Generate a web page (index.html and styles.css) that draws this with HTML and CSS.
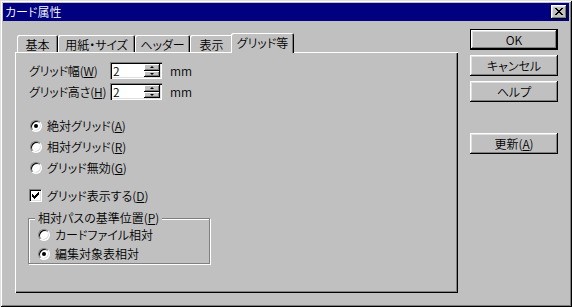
FILE: index.html
```html
<!DOCTYPE html>
<html lang="ja">
<head>
<meta charset="utf-8">
<title>カード属性</title>
<link rel="stylesheet" href="styles.css">
</head>
<body>
<div class="window">
  <div class="titlebar">
    <span class="title">カード属性</span>
    <span class="close">
      <svg width="8" height="7" viewBox="0 0 8 7" shape-rendering="crispEdges">
        <path fill="#000" d="M0 0h2v1H0zM6 0h2v1H6zM1 1h2v1H1zM5 1h2v1H5zM2 2h4v1H2zM3 3h2v1H3zM2 4h4v1H2zM1 5h2v1H1zM5 5h2v1H5zM0 6h2v1H0zM6 6h2v1H6z"/>
      </svg>
    </span>
  </div>
  <div class="body">
    <div class="tabs-area">
      <div class="tabstrip">
        <div class="tab tab-kihon">基本</div>
        <div class="tab tab-paper">用紙・サイズ</div>
        <div class="tab tab-header">ヘッダー</div>
        <div class="tab tab-view">表示</div>
        <div class="tab tab-active">グリッド等</div>
      </div>
      <div class="pane">
        <div class="fields">
          <div class="field-row">
            <span class="field-label">グリッド幅(<u>W</u>)</span>
            <span class="spin-input">
              <span class="spin-value">2</span>
              <span class="spinner"><span class="spin-btn up"></span><span class="spin-btn down"></span></span>
            </span>
            <span class="unit">mm</span>
          </div>
          <div class="field-row">
            <span class="field-label">グリッド高さ(<u>H</u>)</span>
            <span class="spin-input">
              <span class="spin-value">2</span>
              <span class="spinner"><span class="spin-btn up"></span><span class="spin-btn down"></span></span>
            </span>
            <span class="unit">mm</span>
          </div>
        </div>
        <div class="options">
          <div class="option"><span class="radio checked"></span>絶対グリッド(<u>A</u>)</div>
          <div class="option"><span class="radio"></span>相対グリッド(<u>R</u>)</div>
          <div class="option"><span class="radio"></span>グリッド無効(<u>G</u>)</div>
        </div>
        <div class="option check-row">
          <span class="checkbox">
            <svg width="7" height="7" viewBox="0 0 7 7" shape-rendering="crispEdges">
              <path fill="#000" d="M6 0h1v3H6zM5 1h1v3H5zM4 2h1v3H4zM3 3h1v3H3zM2 4h1v3H2zM1 3h1v3H1zM0 2h1v3H0z"/>
            </svg>
          </span>グリッド表示する(<u>D</u>)
        </div>
        <fieldset class="group">
          <legend>相対パスの基準位置(<u>P</u>)</legend>
          <div class="option group-option"><span class="radio"></span>カードファイル相対</div>
          <div class="option group-option"><span class="radio checked"></span>編集対象表相対</div>
        </fieldset>
      </div>
    </div>
    <div class="buttons">
      <div class="btn btn-default">OK</div>
      <div class="btn">キャンセル</div>
      <div class="btn">ヘルプ</div>
      <div class="btn btn-update">更新(<u>A</u>)</div>
    </div>
  </div>
</div>
</body>
</html>
```

FILE: styles.css
```css
* { box-sizing: border-box; }

body {
  margin: 0;
  background: #c0c0c0;
  font-family: "Noto Sans CJK JP", "Noto Sans", sans-serif;
  font-size: 12px;
  font-weight: 350;
  color: #000;
  font-feature-settings: "palt";
  line-height: 1;
}

u { text-underline-offset: 1px; }

.window {
  width: 572px;
  height: 307px;
  padding: 3px;
  background: #c0c0c0;
  box-shadow: inset 1px 1px #dfdfdf, inset -1px -1px #000, inset 2px 2px #fff, inset -2px -2px #808080;
  display: flex;
  flex-direction: column;
}

.titlebar {
  height: 18px;
  background: #000080;
  color: #fff;
  display: flex;
  align-items: center;
  justify-content: space-between;
  padding: 0 2px 0 2px;
}

.title { line-height: 18px; }

.close {
  width: 16px;
  height: 14px;
  background: #c0c0c0;
  box-shadow: inset -1px -1px #000, inset 1px 1px #fff, inset -2px -2px #808080, inset 2px 2px #dfdfdf;
  display: flex;
  align-items: center;
  justify-content: center;
  padding: 0 1px 1px 0;
}

.close svg { display: block; }

.body {
  flex: 1;
  display: flex;
}

.tabs-area {
  margin: 12px 0 0 12px;
  width: 443px;
  display: flex;
  flex-direction: column;
}

.tabstrip {
  display: flex;
  align-items: flex-end;
  height: 19px;
  padding-left: 2px;
  position: relative;
  z-index: 1;
}

.tab {
  height: 17px;
  display: flex;
  align-items: center;
  justify-content: center;
  padding-top: 2px;
  background: #c0c0c0;
  border-radius: 2px 2px 0 0;
  box-shadow: inset 1px 1px #fff, inset -1px 0 #000, inset -2px 0 #808080;
}

.tab-kihon { width: 41px; }
.tab-paper { width: 77px; }
.tab-header { width: 55px; }
.tab-view { width: 43px; }

.tab-active {
  width: 63px;
  height: 20px;
  margin: 0 -2px -1px -2px;
  padding-top: 0;
  padding-bottom: 1px;
}

.pane {
  height: 241px;
  background: #c0c0c0;
  box-shadow: inset 1px 1px #fff, inset -1px -1px #000, inset -2px -2px #808080;
  padding: 10px 0 0 14px;
  display: flex;
  flex-direction: column;
  align-items: flex-start;
}

.fields {
  display: flex;
  flex-direction: column;
  gap: 4px;
}

.field-row {
  display: flex;
  align-items: center;
  height: 17px;
}

.field-label { width: 81px; letter-spacing: -0.2px; }

.spin-input {
  width: 52px;
  height: 17px;
  background: #fff;
  box-shadow: inset 1px 1px #808080, inset 2px 2px #000, inset -1px -1px #fff, inset -2px -2px #dfdfdf;
  display: flex;
  align-items: center;
  justify-content: space-between;
  padding: 2px 2px 2px 3px;
}

.spinner {
  width: 16px;
  height: 13px;
  display: grid;
  grid-template-rows: 7px 6px;
}

.spin-btn {
  background: #c0c0c0;
  box-shadow: inset -1px -1px #000, inset 1px 1px #fff, inset -2px -2px #808080;
  display: flex;
  align-items: center;
  justify-content: center;
  padding: 0 1px 1px 0;
}

.spin-btn::after {
  content: "";
  width: 0;
  height: 0;
  border-left: 2px solid transparent;
  border-right: 2px solid transparent;
}

.spin-btn.up::after { border-bottom: 2px solid #000; }
.spin-btn.down::after { border-top: 2px solid #000; }

.unit { margin-left: 8px; }

.options {
  margin-top: 15px;
  display: flex;
  flex-direction: column;
}

.option {
  display: flex;
  align-items: center;
  height: 21px;
}

.radio {
  width: 12px;
  height: 12px;
  margin: 0 5px 0 1px;
  border-radius: 50%;
  background: #fff;
  border: 1px solid;
  border-color: #808080 #fff #fff #808080;
  box-shadow: inset 1px 1px #000, inset -1px -1px #dfdfdf;
  display: flex;
  align-items: center;
  justify-content: center;
}

.radio.checked::after {
  content: "";
  width: 4px;
  height: 4px;
  border-radius: 50%;
  background: #000;
}

.check-row { margin-top: 7px; }

.checkbox {
  width: 13px;
  height: 13px;
  margin-right: 5px;
  background: #fff;
  border: 1px solid;
  border-color: #808080 #fff #fff #808080;
  box-shadow: inset 1px 1px #000, inset -1px -1px #dfdfdf;
  display: flex;
  align-items: center;
  justify-content: center;
}

.checkbox svg { display: block; }

.group {
  margin: 5px 0 0 -1px;
  padding: 0 0 0 9px;
  width: 182px;
  height: 53px;
  border: 1px solid #808080;
  box-shadow: inset 1px 1px #fff, 1px 1px #fff;
  min-inline-size: 0;
}

.group legend {
  margin-left: -3px;
  padding: 0 3px;
  line-height: 14px;
  background: #c0c0c0;
}

.group-option { height: 19px; }

.group-option .radio { margin-left: 0; }

.buttons {
  margin: 8px 0 0 12px;
  width: 88px;
  display: flex;
  flex-direction: column;
  gap: 5px;
}

.btn {
  height: 21px;
  background: #c0c0c0;
  box-shadow: inset -1px -1px #000, inset 1px 1px #fff, inset -2px -2px #808080, inset 2px 2px #dfdfdf;
  display: flex;
  align-items: center;
  justify-content: center;
}

.btn-default {
  border: 1px solid #000;
}

.btn-update { margin-top: 26px; }
```
